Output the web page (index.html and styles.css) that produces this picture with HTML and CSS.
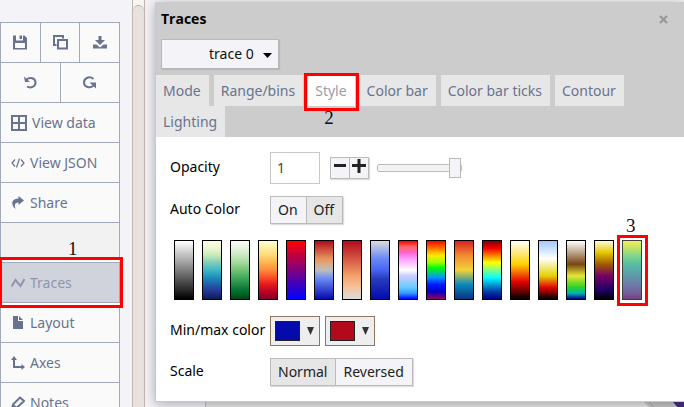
FILE: index.html
```html
<!DOCTYPE html>
<html lang="en">
<head>
<meta charset="utf-8">
<title>Traces</title>
<link rel="stylesheet" href="styles.css">
</head>
<body>
<div class="app">
  <nav class="sidebar">
    <div class="tools">
      <button class="tool" aria-label="Save"><svg width="14" height="15" viewBox="0 0 14 15"><path d="M0 0.500h3v5h7v-5h1.500L14 3v11.500H0zM2 8v5h10V8z" fill-rule="evenodd"/><path d="M6.500 0.500h2.500v3.500h-2.500z"/></svg></button>
      <button class="tool" aria-label="Copy"><svg width="15" height="15" viewBox="0 0 15 15"><path d="M3.500 10H1V1h9v2.500M5 5h9v8.500H5z" fill="none" stroke="#69738f" stroke-width="2"/></svg></button>
      <button class="tool" aria-label="Download"><svg width="14" height="13" viewBox="0 0 14 13"><path d="M5.500 0h3v4H12L7 9 2 4h3.500zM0 8.500h3.500L7 11.500l3.500-3H14v4H0z"/></svg></button>
    </div>
    <div class="tools">
      <button class="tool" aria-label="Undo"><svg width="13" height="13" viewBox="0 0 13 13"><path d="M2.500 3.500C6 0.500 11.500 2 11.500 6.500S6.500 12.500 3 10.500" fill="none" stroke="#69738f" stroke-width="2"/><path d="M0 0.500l1 5.500h5z"/></svg></button>
      <button class="tool" aria-label="Redo"><svg width="13" height="13" viewBox="0 0 13 13"><path d="M10.500 3C6.500-0.500 1 2 1 6.500S7 13 10.500 9.500" fill="none" stroke="#69738f" stroke-width="2"/><path d="M6.500 6.500h6.500v6z"/></svg></button>
    </div>
    <a class="item" href="#data"><svg width="16" height="16" viewBox="0 0 16 16"><path d="M0 0h16v16H0zM2 2v5h5V2zM9 2v5h5V2zM2 9v5h5V9zM9 9v5h5V9z" fill-rule="evenodd"/></svg>View data</a>
    <a class="item" href="#json"><svg width="14" height="10" viewBox="0 0 14 10"><path d="M4 1.500L1 5l3 3.500M10 1.500L13 5l-3 3.500M8.500 0.500l-3 9" fill="none" stroke="#69738f" stroke-width="1.200"/></svg>View JSON</a>
    <a class="item" href="#share"><svg width="14" height="13" viewBox="0 0 14 13"><path d="M7.500 0L13 4.500 7.500 9V6.500C4 6.500 3 8.500 4.500 13 0 9.500-0.500 3 7.500 2.500z"/></svg>Share</a>
    <div class="spacer"><span class="mark mark-one">1</span></div>
    <a class="item current" href="#traces"><svg width="14" height="12" viewBox="0 0 14 12"><path d="M0.500 9.500L4.500 3l5 6 4-7" fill="none" stroke="#8e95ad" stroke-width="2"/></svg>Traces<span class="ring ring-item"></span></a>
    <a class="item" href="#layout"><svg width="14" height="13" viewBox="0 0 14 13"><path d="M2 0h5v5h5v8H2zM8 0l4 4H8z"/></svg>Layout</a>
    <a class="item" href="#axes"><svg width="14" height="14" viewBox="0 0 14 14"><path d="M3 2v9h9" fill="none" stroke="#69738f" stroke-width="2"/><path d="M0 4l3-4 3 4zM10.500 8l3.500 3-3.500 3z"/></svg>Axes</a>
    <a class="item" href="#notes"><svg width="14" height="14" viewBox="0 0 14 14"><path d="M9 1.500l4 3.500-7.500 7L1 13l1-4.500zM2 9l3.500 3" fill="none" stroke="#69738f" stroke-width="2"/></svg>Notes</a>
  </nav>
  <div class="scroller"><div class="thumb"></div></div>
  <main class="stage">
    <section class="panel">
      <header class="head">
        <div class="title-row"><h1>Traces</h1><button class="close" aria-label="Close"><svg width="9" height="9" viewBox="0 0 9 9"><path d="M1 1l7 7M8 1L1 8" stroke="#999" stroke-width="2.400"/></svg></button></div>
        <div class="select-wrap">
          <select aria-label="Trace"><option>trace 0</option></select>
          <svg class="caret" width="9" height="5" viewBox="0 0 9 5"><path d="M0 0h9L4.500 5z"/></svg>
        </div>
        <div class="tabs">
          <button class="tab">Mode</button><button class="tab">Range/bins</button><button class="tab active">Style<span class="ring ring-tab"></span><span class="mark mark-two">2</span></button><button class="tab">Color bar</button><button class="tab">Color bar ticks</button><button class="tab">Contour</button><button class="tab">Lighting</button>
        </div>
      </header>
      <div class="form">
        <div class="row">
          <label class="name" for="opacity">Opacity</label>
          <input class="number" id="opacity" type="text" value="1">
          <div class="group steps">
            <button aria-label="Decrease"><svg width="12" height="14" viewBox="0 0 12 14"><path d="M0 5h12v3H0z"/></svg></button><button aria-label="Increase"><svg width="14" height="14" viewBox="0 0 14 14"><path d="M0 5h14v3H0zM5.500 0h3v14h-3z"/></svg></button>
          </div>
          <input class="slider" type="range" min="0" max="1" step="0.1" value="1" aria-label="Opacity slider">
        </div>
        <div class="row">
          <span class="name">Auto Color</span>
          <div class="group"><button>On</button><button class="on">Off</button></div>
        </div>
        <div class="scales">
          <button class="scale greys" aria-label="Greys"></button>
          <button class="scale ylgnbu" aria-label="YlGnBu"></button>
          <button class="scale greens" aria-label="Greens"></button>
          <button class="scale ylorrd" aria-label="YlOrRd"></button>
          <button class="scale bluered" aria-label="Bluered"></button>
          <button class="scale rdbu" aria-label="RdBu"></button>
          <button class="scale reds" aria-label="Reds"></button>
          <button class="scale blues" aria-label="Blues"></button>
          <button class="scale picnic" aria-label="Picnic"></button>
          <button class="scale rainbow" aria-label="Rainbow"></button>
          <button class="scale portland" aria-label="Portland"></button>
          <button class="scale jet" aria-label="Jet"></button>
          <button class="scale hot" aria-label="Hot"></button>
          <button class="scale blackbody" aria-label="Blackbody"></button>
          <button class="scale earth" aria-label="Earth"></button>
          <button class="scale electric" aria-label="Electric"></button>
          <div class="picked"><button class="scale viridis" aria-label="Viridis"></button><span class="ring ring-scale"></span><span class="mark mark-three">3</span></div>
        </div>
        <div class="row">
          <span class="name">Min/max color</span>
          <button class="picker" aria-label="Minimum color"><span class="chip low"></span><svg width="7" height="8" viewBox="0 0 7 8"><path d="M0 0h7L3.500 8z"/></svg></button>
          <button class="picker" aria-label="Maximum color"><span class="chip high"></span><svg width="7" height="8" viewBox="0 0 7 8"><path d="M0 0h7L3.500 8z"/></svg></button>
        </div>
        <div class="row">
          <span class="name">Scale</span>
          <div class="group"><button class="on">Normal</button><button>Reversed</button></div>
        </div>
      </div>
    </section>
    <div class="plot"><svg width="40" height="6" viewBox="0 0 40 6"><path d="M0 0h40v6H6z" fill="#c8c8c8"/><path d="M5 0l6 6" stroke="#aaa"/><path d="M29 0h11v6h-6z" fill="#472c7a"/></svg></div>
  </main>
</div>
</body>
</html>
```
FILE: styles.css
```css
* { box-sizing: border-box; }
body {
  margin: 0;
  height: 100vh;
  overflow: hidden;
  background: #f3f3f8;
  font: 14px/20px "Noto Sans", "Open Sans", sans-serif;
  color: #111;
}
button, input, select { font: inherit; color: inherit; margin: 0; }
button { padding: 0; }
svg { display: block; flex: none; }
h1 { margin: 0; font: bold 14px/20px "Open Sans", sans-serif; }

.app { display: flex; height: 100%; }

/* sidebar */
.sidebar {
  flex: none;
  width: 120px;
  height: max-content;
  margin-top: 22px;
  border: 1px solid #a2a9ba;
  border-bottom: 0;
  background: #fafafa;
  color: #69738f;
}
.sidebar svg { fill: #69738f; }
.tools { display: flex; height: 40px; border-bottom: 1px solid #a2a9ba; }
.tool {
  flex: 1;
  display: flex;
  align-items: center;
  justify-content: center;
  border: 0;
  background: none;
}
.tool + .tool { border-left: 1px solid #a2a9ba; }
.item {
  position: relative;
  display: flex;
  align-items: center;
  gap: 5px;
  height: 40px;
  padding-left: 10px;
  border-bottom: 1px solid #a2a9ba;
  color: inherit;
  text-decoration: none;
}
.current { background: #d0d3dc; color: #8e95ad; }
.spacer {
  position: relative;
  height: 40px;
  border-bottom: 1px solid #a2a9ba;
  background: #f2f2f2;
}

/* page scrollbar */
.scroller {
  flex: none;
  width: 13px;
  margin-left: 12px;
  padding-top: 5px;
  border: solid #c0b6ad;
  border-width: 0 1px;
  background: #f7f5f3;
}
.thumb {
  height: 100%;
  border-top: 1px solid #b8aea5;
  border-radius: 6px 6px 0 0;
  background: #e7e2dd;
}

/* dialog */
.stage { flex: 1; min-width: 0; display: flex; flex-direction: column; padding: 2px 0 0 10px; }
.panel {
  position: relative;
  flex: none;
  border: solid #c8c8c8;
  border-width: 0 0 1px 1px;
  background: #fff;
  box-shadow: 0 2px 12px rgba(0, 0, 0, 0.3);
}
.head { background: #ccc; }
.title-row {
  display: flex;
  align-items: center;
  justify-content: space-between;
  padding: 7px 16px 10px 5px;
  color: #000;
}
.close { border: 0; background: none; }
.select-wrap { position: relative; width: 118px; margin-left: 5px; }
select {
  appearance: none;
  display: block;
  width: 100%;
  height: 30px;
  padding: 0 0 0 47px;
  border: 1px solid #b8b8b8;
  border-radius: 0;
  background: #f3f3f8;
  box-shadow: 1px 1px 1px #b8b8b8;
}
.caret { position: absolute; right: 7px; top: 14px; }
.tabs { display: flex; flex-wrap: wrap; column-gap: 5px; padding: 6px 50px 0 0; }
.tab {
  position: relative;
  height: 31px;
  padding: 0 8px 0 7px;
  border: 0;
  background: #e7e7e7;
  color: #69738f;
}
.tab.active { background: #fff; color: #9a9cab; }

.form { display: flex; flex-direction: column; gap: 12px; padding: 15px 14px; }
.row { display: flex; align-items: center; }
.name { width: 100px; padding-bottom: 2px; white-space: nowrap; color: #000; }
.number {
  width: 50px;
  height: 32px;
  padding: 0 6px 2px;
  border: 1px solid #c8c8c8;
  background: #fff;
  color: #444;
}
.group { display: flex; box-shadow: 1px 1px 1px #ddd; }
.group button {
  height: 28px;
  padding: 0 8px 0 7px;
  border: 1px solid #bbb;
  background: #f3f3f8;
  color: #222;
}
.group button + button { border-left: 0; }
.group .on { background: #e6e6e6; }
.steps { margin: 0 8px 0 10px; }
.group.steps button {
  display: flex;
  justify-content: center;
  width: 20px;
  height: 22px;
  padding: 1px 0 0;
}
.group.steps button + button { width: 19px; }
.steps svg { fill: #222; }
.slider { appearance: none; width: 85px; height: 20px; background: none; }
.slider::-webkit-slider-runnable-track {
  height: 8px;
  border: 1px solid #bbb;
  border-radius: 2px;
  background: #f3f3f3;
}
.slider::-webkit-slider-thumb {
  appearance: none;
  width: 12px;
  height: 20px;
  margin-top: -7px;
  border: 1px solid #bbb;
  background: #f3f3f8;
}
.picker {
  display: flex;
  align-items: center;
  gap: 7px;
  width: 50px;
  height: 30px;
  margin-right: 5px;
  padding-left: 4px;
  border: 1px solid #91765d;
  background: #eee;
}
.picker svg { fill: #333; }
.chip { width: 25px; height: 20px; border: 1px solid #222; }
.low { background: #050aac; }
.high { background: #b20a1c; }

/* colorscales */
.scales { display: flex; gap: 8px; margin: 4px 0; padding-left: 4px; }
.scale { display: block; flex: none; width: 20px; height: 60px; border: 1px solid #000; }
.picked { position: relative; }
.greys { background: linear-gradient(#fff, #000); }
.ylgnbu { background: linear-gradient(#ffffd9, #edf8d9 12%, #c7e9b4 25%, #7fcdbb 37%, #41b6c4 50%, #1d91c0 62%, #225ea8 75%, #253494 87%, #081d58); }
.greens { background: linear-gradient(#f7fcf5, #e5f5e0, #c7e9c0, #a1d99b, #74c476, #41ab5d, #238b45, #006d2c, #00441b); }
.ylorrd { background: linear-gradient(#ffffcc, #ffeda0, #fed976, #feb24c, #fd8d3c, #fc4e2a, #e31a1c, #bd0026, #800026); }
.bluered { background: linear-gradient(#f00, #00f); }
.rdbu { background: linear-gradient(#b20a1c, #e6915a 30%, #dcaa84 40%, #bebebe 50%, #6a89f7 65%, #050aac); }
.reds { background: linear-gradient(#b20a1c, #f5a069 60%, #f5c39d 80%, #dcdcdc); }
.blues { background: linear-gradient(#dcdcdc, #6a89f7 30%, #5a78f5 40%, #4664f5 50%, #283cbe 65%, #050aac); }
.picnic { background: linear-gradient(#f00, #ff6666 10%, #ff66cc 20%, #ff99ff 30%, #ffccff 40%, #fff 50%, #ccccff 60%, #99ccff 70%, #66ccff 80%, #3399ff 90%, #00f); }
.rainbow { background: linear-gradient(#f00, #ffea00 25%, #97ff00 37%, #00ff00 46%, #0096ff 63%, #0019ff 75%, #0000c8 87%, #96005a); }
.portland { background: linear-gradient(#d92120, #f28b32 25%, #f2d338 50%, #0a88ba 75%, #0c3383); }
.jet { background: linear-gradient(#800000, #fa0000 13%, #ff0 37%, #05ffff 63%, #003caa 87%, #000083); }
.hot { background: linear-gradient(#fff, #ffd200 40%, #e60000 70%, #000); }
.blackbody { background: linear-gradient(#a0c8ff, #fff 30%, #e6d200 60%, #e60000 80%, #000); }
.earth { background: linear-gradient(#fff, #784614 40%, #e6e632 60%, #28d228 80%, #00b4b4 90%, #000082); }
.electric { background: linear-gradient(#fffadc, #e6c800 20%, #a05a00 40%, #780064 60%, #1e0064 85%, #000); }
.viridis {
  opacity: 0.75;
  background: linear-gradient(#fde725, #addc30 12%, #5ec962 25%, #28ae80 37%, #21918c 50%, #2c728e 62%, #3b528b 75%, #48287a 90%, #440154);
}

/* numbered callouts */
.ring { position: absolute; border: 3px solid #f00; pointer-events: none; }
.ring-item {
  left: -2px;
  right: -4px;
  top: -6px;
  bottom: -6px;
  z-index: 1;
  box-shadow: inset 0 2px #fff, inset 0 -2px #fff;
}
.ring-tab { left: -4px; right: -4px; top: -2px; bottom: -5px; z-index: 1; }
.ring-scale { left: -5px; right: -6px; top: -5px; bottom: -6px; }
.mark { position: absolute; font: 19px/20px "Liberation Serif", serif; color: #111; }
.mark-one { left: 67px; top: 16px; }
.mark-two { left: 16px; top: 33px; z-index: 1; }
.mark-three { left: 4px; top: -24px; }

/* plot behind the dialog */
.plot {
  flex: 1;
  display: flex;
  justify-content: flex-end;
  margin-left: 50px;
  border-left: 1px solid #bbb;
  background: #e8e8e8;
}
```
